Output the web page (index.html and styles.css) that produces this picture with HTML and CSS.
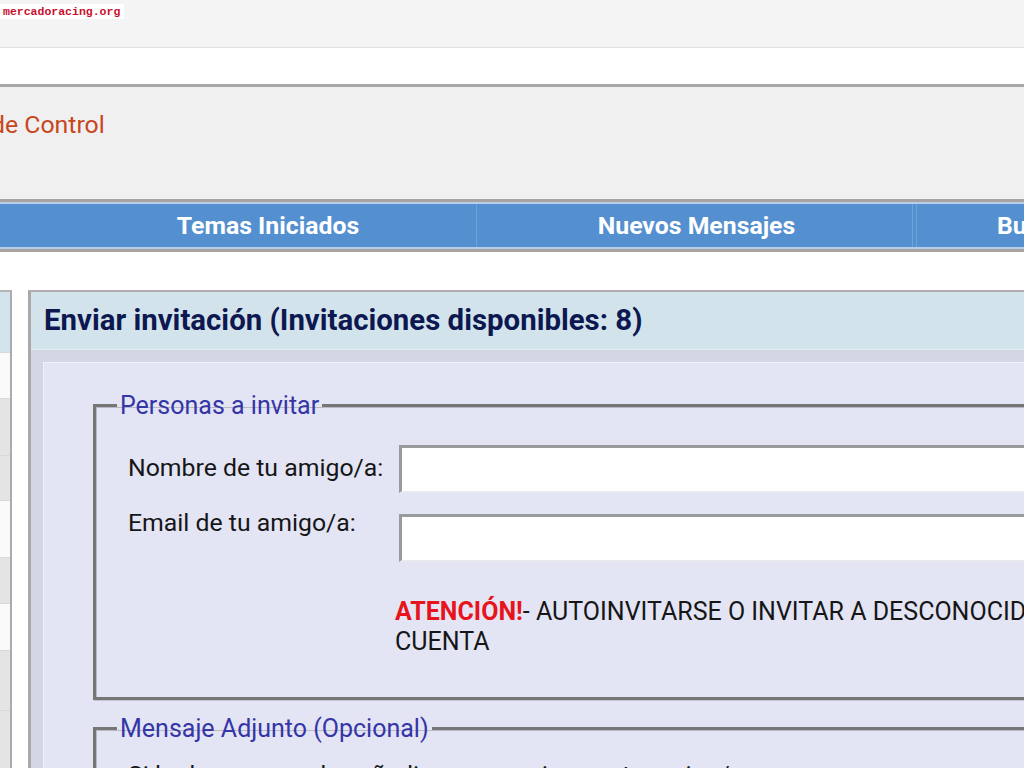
FILE: index.html
```html
<!DOCTYPE html>
<html lang="es">
<head>
<meta charset="utf-8">
<title>Enviar invitación - mercadoracing.org</title>
<link rel="stylesheet" href="styles.css">
</head>
<body>
<div class="topbar"><span class="logo">mercadoracing.org</span></div>
<div class="whitebar"></div>
<div class="cpanel"><h1 class="cp-title">Panel de Control</h1></div>
<nav class="nav">
  <div class="nav-inner">
    <a class="nav-item nav-first" href="#">Temas Iniciados</a>
    <a class="nav-item nav-mid" href="#">Nuevos Mensajes</a>
    <a class="nav-item nav-last" href="#">Buscar</a>
  </div>
</nav>
<div class="layout">
  <aside class="sidebar">
    <div class="side-head">Menú</div>
    <div class="side-row light h46">Perfil</div>
    <div class="side-row gray h57">Mensajes</div>
    <div class="side-row gray h45">Favoritos</div>
    <div class="side-row light h57">Anuncios</div>
    <div class="side-row gray h46">Avisos</div>
    <div class="side-row light h47">Opciones</div>
    <div class="side-row gray h60">Invitar</div>
    <div class="side-row gray h60">Salir</div>
  </aside>
  <main class="panel">
    <h2 class="panel-head">Enviar invitación (Invitaciones disponibles: 8)</h2>
    <div class="panel-body">
      <div class="inner">
        <fieldset class="fs fs-people">
          <legend class="fs-legend">Personas a invitar</legend>
          <div class="form-grid">
            <label class="lbl lbl-center" for="nombre">Nombre de tu amigo/a:</label>
            <input class="inp" id="nombre" type="text">
            <label class="lbl lbl-top" for="email">Email de tu amigo/a:</label>
            <input class="inp" id="email" type="text">
            <div class="spacer"></div>
            <p class="warn"><strong class="warn-title">ATENCIÓN!</strong>- AUTOINVITARSE O INVITAR A DESCONOCIDOS PUEDE SUPONER LA SUSPENSIÓN DE TU<br>CUENTA</p>
          </div>
        </fieldset>
        <fieldset class="fs fs-msg">
          <legend class="fs-legend">Mensaje Adjunto (Opcional)</legend>
          <p class="msg-text">Si lo deseas, puedes añadir un mensaje para tu amigo/a:</p>
        </fieldset>
      </div>
    </div>
  </main>
</div>
</body>
</html>
```
FILE: styles.css
```css
html, body {
  margin: 0;
  padding: 0;
  overflow: hidden;
  width: 1024px;
  height: 768px;
}
body {
  font-family: Roboto, "Liberation Sans", sans-serif;
  background: #ffffff;
  color: #1a1a1a;
}

.topbar {
  height: 47px;
  background: #f4f4f4;
  border-bottom: 1px solid #e2e2e2;
}
.logo {
  display: inline-block;
  background: #ffffff;
  color: #c8102e;
  font-family: "Liberation Mono", monospace;
  font-weight: bold;
  font-size: 11.5px;
  line-height: 15px;
  padding: 0 4px 0 3px;
}

.whitebar {
  height: 36px;
  background: #ffffff;
}

.cpanel {
  height: 112px;
  background: #f0f0f0;
  border-top: 3px solid #a8a8a8;
}
.cp-title {
  margin: 0 0 0 -77px;
  padding-top: 23px;
  font-weight: normal;
  font-size: 24.8px;
  line-height: 29px;
  color: #c8461e;
  white-space: nowrap;
}

.nav {
  border-top: 3px solid #a8a2a2;
  border-bottom: 3px solid #a8a2a2;
}
.nav-inner {
  display: flex;
  height: 43px;
  background: #5490cf;
  border-top: 2px solid #b7cee8;
  border-bottom: 2px solid #b7cee8;
  white-space: nowrap;
}
.nav-item {
  display: flex;
  align-items: center;
  justify-content: center;
  box-sizing: border-box;
  flex: 0 0 auto;
  color: #ffffff;
  font-weight: bold;
  font-size: 24.8px;
  text-decoration: none;
}
.nav-first {
  width: 476px;
  padding-left: 60px;
}
.nav-mid {
  width: 440px;
  border-left: 1px solid #6da2da;
  box-shadow: inset -3px 0 0 #5490cf, inset -4px 0 0 #6da2da;
}
.nav-last {
  justify-content: flex-start;
  padding-left: 80px;
  border-left: 1px solid #6da2da;
}

.layout {
  display: flex;
  gap: 16px;
  margin-top: 38px;
  align-items: flex-start;
}

.sidebar {
  flex: 0 0 auto;
  width: 220px;
  margin-left: -208px;
  border-top: 2px solid #b4b4b4;
  border-right: 2px solid #ababab;
  box-sizing: border-box;
  color: transparent;
}
.side-head {
  height: 60px;
  background: #d4e4ec;
}
.side-row {
  border-top: 1px solid #d8d8d8;
  box-sizing: border-box;
}
.side-row.light { background: #fafafa; }
.side-row.gray { background: #e4e4e4; }
.h45 { height: 45px; }
.h46 { height: 46px; }
.h47 { height: 47px; }
.h57 { height: 57px; }
.h60 { height: 60px; }

.panel {
  flex: 0 0 1200px;
  border-top: 2px solid #b2acb0;
  border-left: 3px solid #a9a9a9;
}
.panel-head {
  margin: 0;
  padding: 12px 13px 13px;
  background: #d3e3ec;
  border-bottom: 1px solid #e6edf0;
  color: #0d1850;
  font-weight: bold;
  font-size: 29.4px;
  line-height: 32px;
  white-space: nowrap;
}
.panel-body {
  background: #d3d6e3;
  padding: 12px 0 0 12px;
}
.inner {
  background: #e3e5f5;
  border-top: 1px solid #eff0fa;
  border-left: 1px solid #eff0fa;
  padding: 29px 0 40px 49px;
}

.fs {
  margin: 0 0 15px 0;
  padding: 26px 20px 40px 32px;
  border: 3px solid #767676;
  box-shadow: inset 1px 1px 0 #b9b9c4, 1px 1px 0 #c4c4cc;
}
.fs-legend {
  margin-left: -11px;
  padding: 0 3px 0 3px;
  color: #3535a5;
  font-size: 25px;
  line-height: 27px;
}
.form-grid {
  display: grid;
  grid-template-columns: 267px 1fr;
  row-gap: 21px;
}
.lbl {
  font-size: 24.8px;
  line-height: 29px;
  color: #161616;
}
.lbl-center { align-self: center; margin-top: -4px; }
.lbl-top { align-self: start; margin-top: -6px; }
.inp {
  box-sizing: border-box;
  height: 48px;
  margin: 0 0 0 4px;
  background: #ffffff;
  border-top: 3px solid #999a9c;
  border-left: 3px solid #999a9c;
  border-right: 1px solid #e4e4e4;
  border-bottom: 2px solid #e8e9ef;
  padding: 0 8px;
  font-family: inherit;
  font-size: 22px;
}
.warn {
  margin: 14px 0 0 0;
  font-size: 25px;
  line-height: 30px;
  color: #161616;
  white-space: nowrap;
}
.warn-title {
  color: #e8141c;
  font-weight: bold;
}
.fs-msg {
  padding-top: 18px;
}
.msg-text {
  margin: 0;
  font-size: 24.8px;
  line-height: 29px;
}
```
